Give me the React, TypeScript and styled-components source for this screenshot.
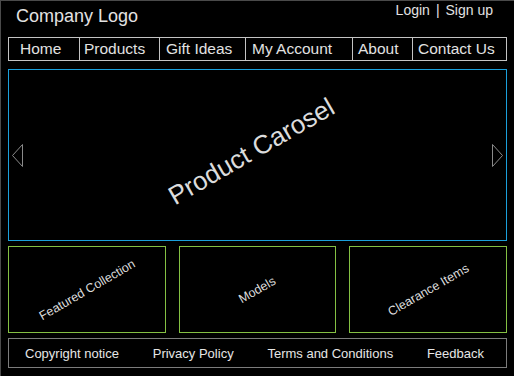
import React from 'react';
import styled, { createGlobalStyle } from "styled-components"

const GlobalStyle = createGlobalStyle`
    html, body {
        margin: 0;
        padding: 0;
        background: #000;
    }
    * {
        box-sizing: border-box;
    }
`

const navItems = [
    { title: "Home", width: 70, pad: 11 },
    { title: "Products", width: 80, pad: 4 },
    { title: "Gift Ideas", width: 86, pad: 6 },
    { title: "My Account", width: 107, pad: 6 },
    { title: "About", width: 60, pad: 5 },
    { title: "Contact Us", width: 96, pad: 5 },
]

const tiles = ["Featured Collection", "Models", "Clearance Items"]

const footerLinks = ["Copyright notice", "Privacy Policy", "Terms and Conditions", "Feedback"]

type ArrowPropsType = {
    dir: "left" | "right"
}

const Arrow = (props: ArrowPropsType) => {
    const points = props.dir === "left" ? "10.5,0.5 0.5,11.5 10.5,22.5" : "0.5,0.5 10.5,11.5 0.5,22.5"
    return (
        <svg width="11" height="23" viewBox="0 0 11 23">
            <polygon points={points} fill="none" stroke="#8a8a8a" strokeWidth="1"/>
        </svg>
    )
}

export default function App() {
    return (
        <Page>
            <GlobalStyle/>
            <Header>
                <Logo>Company Logo</Logo>
                <Auth>
                    <span>Login</span>
                    <span>|</span>
                    <span>Sign up</span>
                </Auth>
            </Header>
            <Nav>
                {navItems.map((item) => (
                    <NavItem key={item.title} $width={item.width} $pad={item.pad}>{item.title}</NavItem>
                ))}
            </Nav>
            <Carousel>
                <Arrow dir="left"/>
                <CarouselTitle>Product Carosel</CarouselTitle>
                <Arrow dir="right"/>
            </Carousel>
            <Tiles>
                {tiles.map((t) => (
                    <Tile key={t}>
                        <TileText>{t}</TileText>
                    </Tile>
                ))}
            </Tiles>
            <Footer>
                {footerLinks.map((l) => (
                    <FooterLink key={l}>{l}</FooterLink>
                ))}
            </Footer>
        </Page>
    );
};


const Page = styled.div`
    width: 514px;
    height: 376px;
    padding: 0 7px 0 7px;
    border-top: 1px solid #4a4a4a;
    border-left: 1px solid #4a4a4a;
    background: #000;
    color: #e2e2e2;
    font-family: "Liberation Sans", Arial, sans-serif;
`

const Header = styled.div`
    display: flex;
    justify-content: space-between;
    align-items: flex-start;
    height: 36px;
    padding: 0 14px 0 8px;
`

const Logo = styled.div`
    font-size: 18px;
    padding-top: 5px;
`

const Auth = styled.div`
    display: flex;
    gap: 6px;
    font-size: 14px;
    padding-top: 1px;
`

const Nav = styled.div`
    display: flex;
    height: 24px;
    border: 1px solid #c4c4c4;
`

const NavItem = styled.div<{ $width: number; $pad: number }>`
    width: ${(p) => p.$width}px;
    padding-left: ${(p) => p.$pad}px;
    font-size: 15.5px;
    line-height: 22px;
    white-space: nowrap;
    border-left: 1px solid #c4c4c4;

    &:first-child {
        border-left: none;
    }

    &:last-child {
        flex: 1;
    }
`

const Carousel = styled.div`
    display: flex;
    align-items: center;
    margin-top: 8px;
    height: 172px;
    padding: 0 3px;
    border: 1px solid #1ba0dc;
`

const CarouselTitle = styled.div`
    flex: 1;
    text-align: center;
    font-size: 26px;
    color: #dcdcdc;
    transform: translate(-6px, -4px) rotate(-30deg);
`

const Tiles = styled.div`
    display: grid;
    grid-template-columns: repeat(3, 1fr);
    gap: 13px;
    margin-top: 5px;
`

const Tile = styled.div`
    display: flex;
    align-items: center;
    justify-content: center;
    height: 87px;
    border: 1px solid #84c043;
`

const TileText = styled.div`
    font-size: 12.5px;
    color: #dcdcdc;
    transform: rotate(-30deg);
`

const Footer = styled.div`
    display: flex;
    align-items: center;
    justify-content: space-between;
    margin-top: 5px;
    height: 30px;
    padding: 0 22px 0 16px;
    border: 1px solid #7c7c7c;
`

const FooterLink = styled.div`
    font-size: 13px;
    color: #e6e6e6;
`
